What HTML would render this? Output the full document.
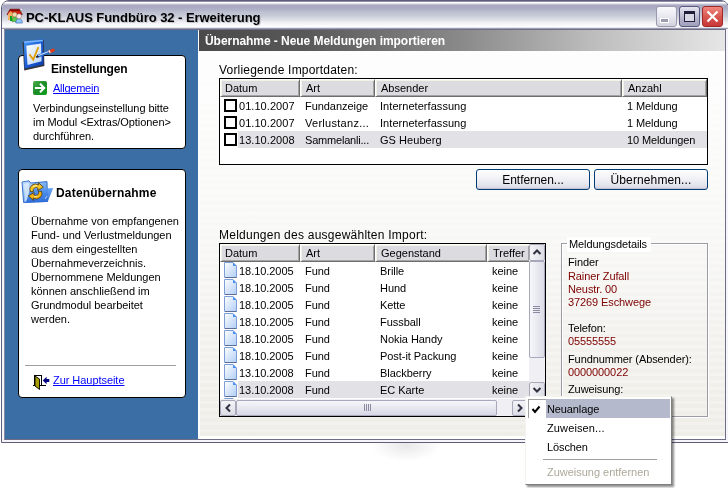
<!DOCTYPE html>
<html><head><meta charset="utf-8">
<style>
html,body{margin:0;padding:0;}
body{will-change:transform;width:728px;height:488px;overflow:hidden;background:#fff;position:relative;font-family:"Liberation Sans",sans-serif;font-size:11px;color:#000;}
div,span,svg{position:absolute;box-sizing:border-box;}
.t{white-space:nowrap;line-height:11px;font-size:11px;}
.t12{white-space:nowrap;line-height:12px;font-size:12px;}
.b{font-weight:bold;}
.lnk{color:#0000ff;text-decoration:underline;text-decoration-skip-ink:none;}
.red{color:#7c0000;}
/* list header cells */
.hc{top:0;height:18px;background:#dcdce0;border-top:1px solid #fff;border-left:1px solid #fff;border-bottom:1px solid #6e6e6e;border-right:1px solid #6e6e6e;box-shadow:inset 1px 1px 0 #f2f2e6, inset -1px -1px 0 #a4a4a4;}
.hc span{position:absolute;top:3px;left:5px;white-space:nowrap;line-height:11px;}
.cb{width:13px;height:13px;border:2px solid #000;background:#fff;}
.btn{height:21px;border:1px solid #003c74;border-radius:3px;background:linear-gradient(#ffffff 0%,#f4f4f8 35%,#e4e4ee 80%,#d2d2e2 100%);box-shadow:inset 0 -1px 0 #c4c4d6;text-align:center;}
</style></head><body>

<!-- window frame -->
<div style="left:1px;top:0;width:728px;height:443px;border:1px solid #5e5e7c;border-radius:8px 8px 0 0;background:#f6f6fa;"></div>
<!-- title bar gradient -->
<div style="left:2px;top:1px;width:726px;height:28px;border-radius:7px 7px 0 0;background:linear-gradient(#8c8ca8 0px,#8c8ca8 1px,#ffffff 1px,#ffffff 2px,#e4e4ec 2px,#e4e4ec 3px,#c0c0d0 3px,#c0c0d0 4px,#a9a9c2 4px,#a9a9c2 5.5px,#b0b2c8 8.5px,#bcc0d0 11px,#c6c9d6 14.5px,#d2d5de 16.5px,#e0e2e8 19.5px,#eeeef3 21px,#fafafc 24.5px,#ffffff 25px,#ffffff 26px,#e6e6ee 26px,#e6e6ee 27px,#9c9cb0 27px,#9c9cb0 28px);"></div>
<!-- inner frame -->
<div style="left:4px;top:29px;width:722px;height:411px;border:1px solid #6e6e88;border-left-color:#8a8aa2;background:#fff;"></div>

<!-- title icon -->
<svg style="left:6px;top:8px" width="18" height="17" viewBox="6 8 18 17">
  <polygon points="10,9.2 19.4,9.2 22.4,14.6 7,14.6" fill="#d02010" stroke="#5a0a00" stroke-width="0.6"/>
  <polygon points="10.2,9.5 19.2,9.5 19.8,11 9.6,11" fill="#800c04"/>
  <polygon points="8,14 10.6,11 13.4,14 13.4,20 8,20" fill="#f8b068"/>
  <rect x="10" y="16" width="2.2" height="5" fill="#10a020"/>
  <path d="M12 21.6 Q12 17 14.7 17 Q17.5 17 17.5 21.6Z" fill="#5ccc4c" stroke="#2a7020" stroke-width="0.5"/>
  <circle cx="14.7" cy="14.6" r="2.4" fill="#f2dca8" stroke="#8a6a40" stroke-width="0.5"/>
  <path d="M15.8 23 Q15.8 18.8 19 18.8 Q22.3 18.8 22.3 23Z" fill="#94ccf8" stroke="#2a5aa8" stroke-width="0.6"/>
  <circle cx="19" cy="16.3" r="2.5" fill="#fde8e2" stroke="#8a6a68" stroke-width="0.5"/>
  <path d="M20.5 9.8 L22 9.2" stroke="#fff" stroke-width="0.9"/>
</svg>
<div class="b" style="left:26px;top:11px;font-size:13px;line-height:13px;white-space:nowrap;letter-spacing:-0.05px;color:#000;text-shadow:1px 1px 0 rgba(120,120,140,0.35);">PC-KLAUS Fundbüro 32 - Erweiterung</div>

<!-- window buttons -->
<div style="left:656px;top:6px;width:21px;height:21px;border:1px solid #9a9aae;border-radius:3px;background:linear-gradient(#fafafc,#e4e4ee 60%,#d2d2de);"></div>
<div style="left:660px;top:18px;width:9px;height:5px;border:1px solid #fff;background:#9c9cb0;"></div>
<div style="left:679px;top:6px;width:21px;height:21px;border:1px solid #5a5a80;border-radius:3px;background:linear-gradient(#e6e6f0,#b4b4cc 60%,#a0a0bc);"></div>
<div style="left:684px;top:11px;width:11px;height:11px;border:1px solid #1e1e3a;border-top-width:3px;background:#d8d8e4;"></div>
<div style="left:702px;top:6px;width:21px;height:21px;border:1px solid #a02828;border-radius:3px;background:linear-gradient(#f08880,#d85850 50%,#c83838);"></div>
<svg style="left:702px;top:6px" width="21" height="21"><path d="M5.5 5.5 L15.5 15.5 M15.5 5.5 L5.5 15.5" stroke="#fff" stroke-width="2.2"/></svg>

<!-- left blue panel -->
<div style="left:5px;top:30px;width:193px;height:409px;background:#3a6ea5;"></div>
<div style="left:198px;top:30px;width:527px;height:409px;background:#fff;"></div>


<!-- box 1 -->
<div style="left:18px;top:55px;width:168px;height:94px;border:1px solid #000;border-radius:4px;background:#fff;"></div>
<svg style="left:18px;top:36px" width="40" height="36" viewBox="18 36 40 36">
  <defs>
   <linearGradient id="cf" x1="0" y1="0" x2="1" y2="1"><stop offset="0" stop-color="#4c9af6"/><stop offset="0.5" stop-color="#1a5ed8"/><stop offset="1" stop-color="#0a3aa8"/></linearGradient>
   <linearGradient id="cp" x1="0" y1="0" x2="1" y2="1"><stop offset="0" stop-color="#ffffff"/><stop offset="1" stop-color="#bcd4f6"/></linearGradient>
  </defs>
  <polygon points="22.6,42.2 43.8,40 44.4,66 24.2,70.4" fill="#34343c"/>
  <polygon points="23.9,41.2 43.1,39.3 43.5,64.6 24.6,68.6" fill="url(#cf)"/>
  <polygon points="24.4,41.6 42.8,39.8 42.8,41.2 24.4,43" fill="#7ab8ff"/>
  <polygon points="26.3,45.8 41,43.5 41.6,61.2 27.5,65" fill="url(#cp)"/>
  <path d="M29.4 54.3 L33.2 59.6 L38.4 47.2" stroke="#e0a008" stroke-width="1.8" fill="none" stroke-linejoin="miter"/>
  <path d="M37.4 56.4 L50 51.4" stroke="#2a64c8" stroke-width="3"/>
  <path d="M38 55.8 L49.8 51.1" stroke="#c0e0ff" stroke-width="1.1"/>
  <path d="M50 51.5 L53.2 50.2" stroke="#e03c18" stroke-width="3.2" stroke-linecap="round"/>
  <path d="M49 51.9 L50.2 51.4" stroke="#f0f0f0" stroke-width="3"/>
  <path d="M36.2 57.2 L38.4 56.1" stroke="#222" stroke-width="1.8"/>
</svg>
<div class="t12 b" style="left:51px;top:63px;letter-spacing:-0.18px;">Einstellungen</div>
<svg style="left:33px;top:81px" width="14" height="14">
  <defs><linearGradient id="gg" x1="0" y1="0" x2="1" y2="1"><stop offset="0" stop-color="#4cae4c"/><stop offset="0.5" stop-color="#1c8c28"/><stop offset="1" stop-color="#0ca01a"/></linearGradient></defs>
  <rect x="0" y="0" width="14" height="14" rx="2" fill="url(#gg)"/>
  <path d="M2 7 L11.2 7" stroke="#fff" stroke-width="2"/>
  <path d="M7 2.8 L11.2 7 L7 11.2" stroke="#fff" stroke-width="2" fill="none"/>
</svg>
<div class="t lnk" style="left:53px;top:83px;letter-spacing:-0.25px;">Allgemein</div>
<div class="t" style="left:33px;top:103px;letter-spacing:-0.06px;">Verbindungseinstellung bitte</div>
<div class="t" style="left:33px;top:117px;letter-spacing:-0.06px;">im Modul &lt;Extras/Optionen&gt;</div>
<div class="t" style="left:33px;top:131px;letter-spacing:-0.06px;">durchführen.</div>

<!-- box 2 -->
<div style="left:18px;top:169px;width:168px;height:229px;border:1px solid #000;border-radius:4px;background:#fff;"></div>
<svg style="left:20px;top:178px" width="36" height="28" viewBox="20 178 36 28">
  <defs>
   <linearGradient id="fb" x1="0" y1="0" x2="1" y2="1"><stop offset="0" stop-color="#d0e4fc"/><stop offset="0.4" stop-color="#8cbaf4"/><stop offset="1" stop-color="#3a7ee4"/></linearGradient>
   <linearGradient id="ff" x1="0" y1="0" x2="0" y2="1"><stop offset="0" stop-color="#5a9cf2"/><stop offset="1" stop-color="#2a68d8"/></linearGradient>
  </defs>
  <polygon points="22,182 29,180.8 30.6,183 47,181.6 47.6,201.4 23.6,202.6" fill="url(#fb)" stroke="#2a66c8" stroke-width="0.9"/>
  <polygon points="24,184 29,183 29.5,200 25,201" fill="#eef6ff" opacity="0.6"/>
  <polygon points="30,189.5 53.2,188 47.6,202 26,202.6" fill="url(#ff)" opacity="0.92"/>
  <path d="M45 199 L47 196" stroke="#cfe4ff" stroke-width="0.8"/>
  <path d="M30.2 191.6 A5.6 5.6 0 0 1 38.6 185 L38.2 182.4 L43.4 187.2 L37.6 190.4 L38 188.2 A3 3 0 0 0 33.4 191.8 Z" fill="#f8c428" stroke="#3a2800" stroke-width="0.7"/>
  <path d="M41.6 191.4 A5.6 5.6 0 0 1 33.2 198 L33.6 200.6 L28.4 195.8 L34.2 192.6 L33.8 194.8 A3 3 0 0 0 38.4 191.2 Z" fill="#f4b010" stroke="#3a2800" stroke-width="0.7"/>
  <path d="M33 186.5 L37 185.5" stroke="#fff4c0" stroke-width="0.9"/>
  <path d="M34 197 L37.5 196" stroke="#fff4c0" stroke-width="0.9"/>
</svg>
<div class="t12 b" style="left:56px;top:187px;letter-spacing:0.18px;">Datenübernahme</div>
<div class="t" style="left:31px;top:214px;letter-spacing:-0.03px;line-height:14px;white-space:pre;">Übernahme von empfangenen
Fund- und Verlustmeldungen
aus dem eingestellten
Übernahmeverzeichnis.
Übernommene Meldungen
können anschließend im
Grundmodul bearbeitet
werden.</div>
<div style="left:25px;top:365px;width:151px;height:1px;background:#a0a0a0;"></div>
<svg style="left:32px;top:374px" width="18" height="17" viewBox="32 374 18 17">
  <path d="M33 385.5 L46 385.5" stroke="#000" stroke-width="1"/>
  <rect x="34.5" y="375.5" width="7" height="10" fill="#fff" stroke="#000" stroke-width="1"/>
  <polygon points="35,376 39.5,379 39.5,389.5 35,386" fill="#a89e00" stroke="#000" stroke-width="0.9"/>
  <polygon points="42.8,380.5 46.6,376.8 46.6,379 49.3,379 49.3,382 46.6,382 46.6,384.2" fill="#000080"/>
</svg>
<div class="t lnk" style="left:53px;top:375px;letter-spacing:-0.05px;">Zur Hauptseite</div>


<!-- content background -->
<div style="left:200px;top:51px;width:525px;height:385px;background:linear-gradient(#fdfdfd 0%,#f9f9f8 40%,#f3f2ee 72%,#eeede7 100%);"></div>
<div style="left:200px;top:51px;width:525px;height:385px;background:repeating-linear-gradient(rgba(255,255,255,0.25) 0px,rgba(255,255,255,0.25) 3px,rgba(0,0,0,0) 3px,rgba(0,0,0,0) 7px);"></div>
<!-- header bar -->
<div style="left:199px;top:30px;width:526px;height:21px;background:linear-gradient(90deg,#4a4a4a 0%,#585858 20%,#8a8a8a 50%,#bdbdbd 75%,#e6e6e6 100%);"></div>
<div class="t12 b" style="left:205px;top:35px;color:#fff;letter-spacing:-0.05px;">Übernahme - Neue Meldungen importieren</div>

<!-- table 1 -->
<div class="t12" style="left:219px;top:64px;letter-spacing:0.2px;">Vorliegende Importdaten:</div>
<div style="left:219px;top:78px;width:489px;height:87px;border:1px solid #000;background:#fff;">
  <div class="hc" style="left:0;width:80px;"><span style="left:4px">Datum</span></div>
  <div class="hc" style="left:80px;width:75px;"><span>Art</span></div>
  <div class="hc" style="left:155px;width:247px;"><span>Absender</span></div>
  <div class="hc" style="left:402px;width:85px;"><span>Anzahl</span></div>
  <div style="left:18px;top:52px;width:469px;height:17px;background:#e2e2e6;"></div>
  <div class="cb" style="left:4px;top:20px;"></div>
  <div class="cb" style="left:4px;top:37px;"></div>
  <div class="cb" style="left:4px;top:54px;"></div>
</div>
<div class="t" style="left:239px;top:101px;letter-spacing:0.05px;">01.10.2007</div>
<div class="t" style="left:305px;top:101px;letter-spacing:-0.05px;">Fundanzeige</div>
<div class="t" style="left:380px;top:101px;letter-spacing:0.05px;">Interneterfassung</div>
<div class="t" style="left:627px;top:101px;letter-spacing:-0.1px;">1 Meldung</div>
<div class="t" style="left:239px;top:118px;letter-spacing:0.05px;">01.10.2007</div>
<div class="t" style="left:305px;top:118px;letter-spacing:0.28px;">Verlustanz...</div>
<div class="t" style="left:380px;top:118px;letter-spacing:0.05px;">Interneterfassung</div>
<div class="t" style="left:627px;top:118px;letter-spacing:-0.1px;">1 Meldung</div>
<div class="t" style="left:239px;top:135px;letter-spacing:0.05px;">13.10.2008</div>
<div class="t" style="left:305px;top:135px;letter-spacing:-0.2px;">Sammelanli...</div>
<div class="t" style="left:380px;top:135px;letter-spacing:0.05px;">GS Heuberg</div>
<div class="t" style="left:627px;top:135px;letter-spacing:-0.12px;">10 Meldungen</div>

<div class="btn" style="left:476px;top:169px;width:114px;"><span class="t12" style="position:static;display:block;margin-top:4px;letter-spacing:-0.05px;">Entfernen...</span></div>
<div class="btn" style="left:594px;top:169px;width:114px;"><span class="t12" style="position:static;display:block;margin-top:4px;letter-spacing:0.12px;">Übernehmen...</span></div>


<!-- table 2 -->
<div class="t12" style="left:219px;top:229px;letter-spacing:0.24px;">Meldungen des ausgewählten Import:</div>
<div style="left:219px;top:243px;width:327px;height:174px;border:1px solid #000;background:#fff;overflow:hidden;">
  <div class="hc" style="left:0;width:80px;"><span style="left:4px">Datum</span></div>
  <div class="hc" style="left:80px;width:75px;"><span>Art</span></div>
  <div class="hc" style="left:155px;width:112px;"><span>Gegenstand</span></div>
  <div class="hc" style="left:267px;width:43px;"><span>Treffer</span></div>
  <div style="left:18px;top:137px;width:292px;height:17px;background:#e2e2e6;"></div>
<svg style="left:0;top:0" width="1" height="1"><defs><linearGradient id="fg" x1="0" y1="0" x2="1" y2="1"><stop offset="0" stop-color="#ffffff"/><stop offset="1" stop-color="#b0cdf6"/></linearGradient></defs></svg>
<svg style="left:4px;top:18px" width="14" height="16" viewBox="0 0 14 16"><defs></defs><path d="M0.5 0.5 L9 0.5 L12.5 4 L12.5 15.5 L0.5 15.5 Z" fill="url(#fg)" stroke="#7e9ed8" stroke-width="1"/><path d="M9 0.5 L12.5 4 L9 4 Z" fill="#4a90f0"/><path d="M1 15.5 L12.5 15.5" stroke="#5a6e98" stroke-width="1"/></svg>
<svg style="left:4px;top:35px" width="14" height="16" viewBox="0 0 14 16"><defs></defs><path d="M0.5 0.5 L9 0.5 L12.5 4 L12.5 15.5 L0.5 15.5 Z" fill="url(#fg)" stroke="#7e9ed8" stroke-width="1"/><path d="M9 0.5 L12.5 4 L9 4 Z" fill="#4a90f0"/><path d="M1 15.5 L12.5 15.5" stroke="#5a6e98" stroke-width="1"/></svg>
<svg style="left:4px;top:52px" width="14" height="16" viewBox="0 0 14 16"><defs></defs><path d="M0.5 0.5 L9 0.5 L12.5 4 L12.5 15.5 L0.5 15.5 Z" fill="url(#fg)" stroke="#7e9ed8" stroke-width="1"/><path d="M9 0.5 L12.5 4 L9 4 Z" fill="#4a90f0"/><path d="M1 15.5 L12.5 15.5" stroke="#5a6e98" stroke-width="1"/></svg>
<svg style="left:4px;top:69px" width="14" height="16" viewBox="0 0 14 16"><defs></defs><path d="M0.5 0.5 L9 0.5 L12.5 4 L12.5 15.5 L0.5 15.5 Z" fill="url(#fg)" stroke="#7e9ed8" stroke-width="1"/><path d="M9 0.5 L12.5 4 L9 4 Z" fill="#4a90f0"/><path d="M1 15.5 L12.5 15.5" stroke="#5a6e98" stroke-width="1"/></svg>
<svg style="left:4px;top:86px" width="14" height="16" viewBox="0 0 14 16"><defs></defs><path d="M0.5 0.5 L9 0.5 L12.5 4 L12.5 15.5 L0.5 15.5 Z" fill="url(#fg)" stroke="#7e9ed8" stroke-width="1"/><path d="M9 0.5 L12.5 4 L9 4 Z" fill="#4a90f0"/><path d="M1 15.5 L12.5 15.5" stroke="#5a6e98" stroke-width="1"/></svg>
<svg style="left:4px;top:103px" width="14" height="16" viewBox="0 0 14 16"><defs></defs><path d="M0.5 0.5 L9 0.5 L12.5 4 L12.5 15.5 L0.5 15.5 Z" fill="url(#fg)" stroke="#7e9ed8" stroke-width="1"/><path d="M9 0.5 L12.5 4 L9 4 Z" fill="#4a90f0"/><path d="M1 15.5 L12.5 15.5" stroke="#5a6e98" stroke-width="1"/></svg>
<svg style="left:4px;top:120px" width="14" height="16" viewBox="0 0 14 16"><defs></defs><path d="M0.5 0.5 L9 0.5 L12.5 4 L12.5 15.5 L0.5 15.5 Z" fill="url(#fg)" stroke="#7e9ed8" stroke-width="1"/><path d="M9 0.5 L12.5 4 L9 4 Z" fill="#4a90f0"/><path d="M1 15.5 L12.5 15.5" stroke="#5a6e98" stroke-width="1"/></svg>
<svg style="left:4px;top:137px" width="14" height="16" viewBox="0 0 14 16"><defs></defs><path d="M0.5 0.5 L9 0.5 L12.5 4 L12.5 15.5 L0.5 15.5 Z" fill="url(#fg)" stroke="#7e9ed8" stroke-width="1"/><path d="M9 0.5 L12.5 4 L9 4 Z" fill="#4a90f0"/><path d="M1 15.5 L12.5 15.5" stroke="#5a6e98" stroke-width="1"/></svg>
<svg style="left:4px;top:154px" width="14" height="16" viewBox="0 0 14 16"><defs></defs><path d="M0.5 0.5 L9 0.5 L12.5 4 L12.5 15.5 L0.5 15.5 Z" fill="url(#fg)" stroke="#7e9ed8" stroke-width="1"/><path d="M9 0.5 L12.5 4 L9 4 Z" fill="#4a90f0"/><path d="M1 15.5 L12.5 15.5" stroke="#5a6e98" stroke-width="1"/></svg>
</div>
<div class="t" style="left:239px;top:266px;letter-spacing:-0.05px;">18.10.2005</div>
<div class="t" style="left:305px;top:266px;letter-spacing:-0.05px;">Fund</div>
<div class="t" style="left:380px;top:266px;letter-spacing:-0.05px;">Brille</div>
<div class="t" style="left:492px;top:266px;letter-spacing:-0.05px;">keine</div>
<div class="t" style="left:239px;top:283px;letter-spacing:-0.05px;">18.10.2005</div>
<div class="t" style="left:305px;top:283px;letter-spacing:-0.05px;">Fund</div>
<div class="t" style="left:380px;top:283px;letter-spacing:-0.05px;">Hund</div>
<div class="t" style="left:492px;top:283px;letter-spacing:-0.05px;">keine</div>
<div class="t" style="left:239px;top:300px;letter-spacing:-0.05px;">18.10.2005</div>
<div class="t" style="left:305px;top:300px;letter-spacing:-0.05px;">Fund</div>
<div class="t" style="left:380px;top:300px;letter-spacing:-0.05px;">Kette</div>
<div class="t" style="left:492px;top:300px;letter-spacing:-0.05px;">keine</div>
<div class="t" style="left:239px;top:317px;letter-spacing:-0.05px;">18.10.2005</div>
<div class="t" style="left:305px;top:317px;letter-spacing:-0.05px;">Fund</div>
<div class="t" style="left:380px;top:317px;letter-spacing:-0.05px;">Fussball</div>
<div class="t" style="left:492px;top:317px;letter-spacing:-0.05px;">keine</div>
<div class="t" style="left:239px;top:334px;letter-spacing:-0.05px;">18.10.2005</div>
<div class="t" style="left:305px;top:334px;letter-spacing:-0.05px;">Fund</div>
<div class="t" style="left:380px;top:334px;letter-spacing:-0.05px;">Nokia Handy</div>
<div class="t" style="left:492px;top:334px;letter-spacing:-0.05px;">keine</div>
<div class="t" style="left:239px;top:351px;letter-spacing:-0.05px;">18.10.2005</div>
<div class="t" style="left:305px;top:351px;letter-spacing:-0.05px;">Fund</div>
<div class="t" style="left:380px;top:351px;letter-spacing:-0.05px;">Post-it Packung</div>
<div class="t" style="left:492px;top:351px;letter-spacing:-0.05px;">keine</div>
<div class="t" style="left:239px;top:368px;letter-spacing:-0.05px;">13.10.2008</div>
<div class="t" style="left:305px;top:368px;letter-spacing:-0.05px;">Fund</div>
<div class="t" style="left:380px;top:368px;letter-spacing:-0.05px;">Blackberry</div>
<div class="t" style="left:492px;top:368px;letter-spacing:-0.05px;">keine</div>
<div class="t" style="left:239px;top:385px;letter-spacing:-0.05px;">13.10.2008</div>
<div class="t" style="left:305px;top:385px;letter-spacing:-0.05px;">Fund</div>
<div class="t" style="left:380px;top:385px;letter-spacing:-0.05px;">EC Karte</div>
<div class="t" style="left:492px;top:385px;letter-spacing:-0.05px;">keine</div>

<!-- vertical scrollbar -->
<div style="left:529px;top:244px;width:16px;height:155px;background:#f0f0f4;"></div>
<div style="left:529px;top:244px;width:16px;height:17px;border:1px solid #a8a8b8;border-radius:2px;background:linear-gradient(90deg,#f4f4f8,#dcdce6);"></div>
<svg style="left:529px;top:244px" width="16" height="17"><path d="M4.5 10 L8 6.5 L11.5 10" stroke="#303040" stroke-width="2" fill="none"/></svg>
<div style="left:529px;top:261px;width:16px;height:97px;border:1px solid #a8a8bc;border-radius:2px;background:linear-gradient(90deg,#f6f6fa,#dcdce8);"></div>
<div style="left:533px;top:306px;width:7px;height:7px;background:repeating-linear-gradient(#8a8aa0 0,#8a8aa0 1px,transparent 1px,transparent 2px);"></div>
<div style="left:529px;top:382px;width:16px;height:16px;border:1px solid #a8a8b8;border-radius:2px;background:linear-gradient(90deg,#f4f4f8,#dcdce6);"></div>
<svg style="left:529px;top:382px" width="16" height="16"><path d="M4.5 6 L8 9.5 L11.5 6" stroke="#303040" stroke-width="2" fill="none"/></svg>
<!-- horizontal scrollbar -->
<div style="left:220px;top:399px;width:325px;height:17px;background:#f0f0f4;"></div>
<div style="left:220px;top:400px;width:16px;height:16px;border:1px solid #a8a8b8;border-radius:2px;background:linear-gradient(#f4f4f8,#dcdce6);"></div>
<svg style="left:220px;top:400px" width="16" height="16"><path d="M10 4.5 L6.5 8 L10 11.5" stroke="#303040" stroke-width="2" fill="none"/></svg>
<div style="left:236px;top:400px;width:261px;height:16px;border:1px solid #a8a8bc;border-radius:2px;background:linear-gradient(#f6f6fa,#d8d8e6);"></div>
<div style="left:364px;top:404px;width:7px;height:7px;background:repeating-linear-gradient(90deg,#8a8aa0 0,#8a8aa0 1px,transparent 1px,transparent 2px);"></div>
<div style="left:512px;top:400px;width:16px;height:16px;border:1px solid #a8a8b8;border-radius:2px;background:linear-gradient(#f4f4f8,#dcdce6);"></div>
<svg style="left:512px;top:400px" width="16" height="16"><path d="M6 4.5 L9.5 8 L6 11.5" stroke="#303040" stroke-width="2" fill="none"/></svg>

<!-- group box -->
<div style="left:561px;top:243px;width:147px;height:174px;border:1px solid #9c9ca6;box-shadow:1px 1px 0 #fff, inset 1px 1px 0 #fff;"></div>
<div style="left:567px;top:237px;width:84px;height:15px;background:#fff;"></div>
<div class="t" style="left:569px;top:239px;letter-spacing:-0.1px;">Meldungsdetails</div>
<div class="t" style="left:568px;top:257px;letter-spacing:-0.1px;">Finder</div>
<div class="t red" style="left:568px;top:271px;letter-spacing:-0.1px;">Rainer Zufall</div>
<div class="t red" style="left:568px;top:284px;letter-spacing:-0.1px;">Neustr. 00</div>
<div class="t red" style="left:568px;top:297px;letter-spacing:-0.1px;">37269 Eschwege</div>
<div class="t" style="left:568px;top:323px;letter-spacing:-0.1px;">Telefon:</div>
<div class="t red" style="left:568px;top:336px;letter-spacing:-0.1px;">05555555</div>
<div class="t" style="left:568px;top:354px;letter-spacing:-0.1px;">Fundnummer (Absender):</div>
<div class="t red" style="left:568px;top:367px;letter-spacing:-0.1px;">0000000022</div>
<div class="t" style="left:568px;top:384px;letter-spacing:-0.1px;">Zuweisung:</div>

<!-- below-window faint blob -->
<div style="left:368px;top:443px;width:76px;height:20px;background:radial-gradient(ellipse at 50% 10%,rgba(0,0,0,0.09),rgba(0,0,0,0) 65%);"></div>

<!-- popup menu -->
<div style="left:525px;top:396px;width:147px;height:89px;border:1px solid #808080;border-left-color:#f4f4ee;border-top-color:#f4f4ee;background:#fff;box-shadow:2px 2px 2px rgba(0,0,0,0.45);"></div>
<div style="left:528px;top:399px;width:18px;height:19px;border-left:1px solid #a0a0a0;border-top:1px solid #a0a0a0;"></div>
<svg style="left:528px;top:399px" width="18" height="19"><path d="M4.5 10 L7 13 L11.5 7.5" stroke="#000" stroke-width="2" fill="none"/></svg>
<div style="left:546px;top:399px;width:124px;height:19px;background:#b5b9cc;"></div>
<div class="t" style="left:547px;top:404px;letter-spacing:-0.12px;">Neuanlage</div>
<div class="t" style="left:547px;top:423px;letter-spacing:0.12px;">Zuweisen...</div>
<div class="t" style="left:547px;top:442px;letter-spacing:-0.1px;">Löschen</div>
<div style="left:543px;top:459px;width:114px;height:1px;background:#a0a0a0;"></div>
<div class="t" style="left:547px;top:467px;letter-spacing:-0.02px;color:#aca899;">Zuweisung entfernen</div>

</body></html>
